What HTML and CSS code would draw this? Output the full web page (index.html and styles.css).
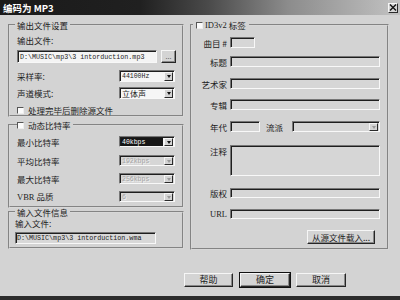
FILE: index.html
```html
<!DOCTYPE html>
<html>
<head>
<meta charset="utf-8">
<link rel="stylesheet" href="styles.css">
</head>
<body>
<div class="window">
  <div class="titlebar">
    <span class="title">编码为 MP3</span>
    <span class="close"><svg width="8" height="7" viewBox="0 0 8 7"><path d="M1 0.5 L7 6.5 M7 0.5 L1 6.5" stroke="#111" stroke-width="1.4"/></svg></span>
  </div>
  <div class="main">
    <div class="left">
      <fieldset class="group g1">
        <legend>输出文件设置</legend>
        <div class="lbl l1">输出文件:</div>
        <div class="filerow">
          <div class="edit white mono">D:\MUSIC\mp3\3 intorduction.mp3</div>
          <div class="btn dots">...</div>
        </div>
        <div class="row r1"><span>采样率:</span><div class="combo"><span class="val mono">44100Hz</span><span class="arrow"></span></div></div>
        <div class="row r2"><span>声道模式:</span><div class="combo"><span class="val">立体声</span><span class="arrow"></span></div></div>
        <div class="chkrow"><span class="chk"></span><span>处理完毕后删除源文件</span></div>
      </fieldset>
      <fieldset class="group g2">
        <legend><span class="chk"></span>动态比特率</legend>
        <div class="row s1"><span>最小比特率</span><div class="combo"><span class="val mono sel">40kbps</span><span class="arrow"></span></div></div>
        <div class="row s2"><span>平均比特率</span><div class="combo dis"><span class="val mono">192kbps</span><span class="arrow"></span></div></div>
        <div class="row s3"><span>最大比特率</span><div class="combo dis"><span class="val mono">256kbps</span><span class="arrow"></span></div></div>
        <div class="row s4"><span><span class="ser">VBR</span> 品质</span><div class="combo dis"><span class="val mono">6</span><span class="arrow"></span></div></div>
      </fieldset>
      <fieldset class="group g3">
        <legend>输入文件信息</legend>
        <div class="lbl l3">输入文件:</div>
        <div class="edit in mono">D:\MUSIC\mp3\3 intorduction.wma</div>
      </fieldset>
    </div>
    <fieldset class="group right">
      <legend><span class="chk"></span><span class="ser">ID3v2</span>&nbsp;标签</legend>
      <div class="frow t1"><span class="flbl">曲目 #</span><div class="edit track"></div></div>
      <div class="frow t2"><span class="flbl">标题</span><div class="edit wide"></div></div>
      <div class="frow t3"><span class="flbl">艺术家</span><div class="edit wide"></div></div>
      <div class="frow t4"><span class="flbl">专辑</span><div class="edit wide"></div></div>
      <div class="frow t5"><span class="flbl">年代</span><div class="edit year"></div><span class="genre">流派</span><div class="combo dis genrebox"><span class="val"></span><span class="arrow"></span></div></div>
      <div class="frow t6"><span class="flbl">注释</span><div class="edit wide memo"></div></div>
      <div class="frow t7"><span class="flbl">版权</span><div class="edit wide"></div></div>
      <div class="frow t8"><span class="flbl ser">URL</span><div class="edit wide"></div></div>
      <div class="loadrow"><div class="btn load">从源文件载入...</div></div>
    </fieldset>
  </div>
  <div class="buttons">
    <div class="btn big">帮助</div>
    <div class="btn big def">确定</div>
    <div class="btn big">取消</div>
  </div>
</div>
</body>
</html>
```
FILE: styles.css
```css
* { box-sizing: border-box; }
html, body { margin: 0; padding: 0; }
body {
  width: 400px; height: 300px; overflow: hidden;
  background: #d3d3d3;
  font-family: "Noto Sans CJK SC", "Noto Sans", sans-serif;
  font-size: 8.5px; line-height: 10px; color: #1c1c1c;
}
.ser { font-family: "Liberation Serif", "Noto Sans CJK SC", serif; font-size: 8.5px; }
.window {
  width: 400px; height: 300px;
  display: flex; flex-direction: column;
  border-bottom: 4px solid #2c2c2c;
}
.titlebar {
  height: 15px; flex: none;
  display: flex; align-items: center; justify-content: space-between;
  padding: 0 2px 0 3px;
  background: linear-gradient(to right, #1a1a1a 0%, #202020 35%, #4a4a4a 52%, #8c8c8c 72%, #c2c2c2 100%);
}
.title { color: #fff; font-weight: bold; font-size: 9.5px; line-height: 12px; }
.close {
  width: 10px; height: 10px; display: flex; align-items: center; justify-content: center;
  background: #d6d6d6;
  border: 1px solid; border-color: #f6f6f6 #2a2a2a #2a2a2a #f6f6f6;
}
.main { flex: none; display: flex; gap: 6px; padding: 5px 0 0 8px; }
.left { width: 176px; display: flex; flex-direction: column; }
.group {
  margin: 0; min-width: 0;
  border: 2px groove #d8d8d8;
}
.group legend { padding: 0 2px; line-height: 10px; height: 10px; display: flex; align-items: center; }
.g1 { padding: 0 6px 0 7px; }
.g1 legend { margin-left: -2px; }
.g2 { margin-top: 3px; padding: 0 6px 4px 7px; }
.g2 legend { margin-left: 0; padding: 0 2px 0 0; }
.g3 { padding: 0 6px 3px 5px; }
.g3 legend { margin-left: 0; line-height: 8px; height: 8px; }
.lbl { height: 10px; }
.l1 { margin-top: 5px; }
.l3 { margin-top: 2px; }
.filerow { margin-top: 5px; height: 13px; display: flex; gap: 4px; }
.edit {
  height: 100%;
  background: #d6d6d6;
  border: 1px solid; border-color: #767676 #f8f8f8 #f8f8f8 #767676;
  box-shadow: inset 1px 1px 0 #1e1e1e;
}
.white { background: #f4f4f4; }
.filerow .edit { width: 140px; padding: 1px 0 0 2px; font-size: 6.7px; line-height: 10px; white-space: nowrap; overflow: hidden; }
.mono { font-family: "Liberation Mono", "Courier New", monospace; }
.btn {
  background: #d4d4d4;
  border: 1px solid; border-color: #f6f6f6 #262626 #262626 #f6f6f6;
  box-shadow: inset -1px -1px 0 #888;
  display: flex; align-items: center; justify-content: center;
}
.dots { width: 15px; height: 13px; font-size: 7px; color: #555; padding-bottom: 2px; }
.row { display: flex; justify-content: space-between; align-items: center; padding-right: 1px; }
.r1 { margin-top: 7px; height: 12px; }
.r2 { margin-top: 5px; height: 12px; }
.combo {
  width: 56px; height: 100%; display: flex;
  background: #f6f6f6;
  border: 1px solid; border-color: #767676 #f8f8f8 #f8f8f8 #767676;
  box-shadow: inset 1px 1px 0 #1e1e1e;
  padding: 1px 1px 0 1px;
}
.combo .val { flex: 1; font-size: 6.5px; line-height: 9px; padding-left: 1px; white-space: nowrap; overflow: hidden; }
.combo .val:not(.mono) { font-size: 8px; line-height: 9px; }
.combo .sel { background: #161616; color: #fff; margin-right: 1px; }
.arrow {
  width: 9px; flex: none; position: relative;
  background: #d4d4d4;
  border: 1px solid; border-color: #f6f6f6 #2a2a2a #2a2a2a #f6f6f6;
  display: flex; align-items: center; justify-content: center;
}
.arrow::after {
  content: ""; width: 0; height: 0;
  border-left: 2.5px solid transparent; border-right: 2.5px solid transparent;
  border-top: 3px solid #111;
}
.combo.dis { background: #d6d6d6; }
.combo.dis .val { color: #a4a4a4; text-shadow: 1px 1px 0 #f2f2f2; }
.combo.dis .arrow::after { border-top-color: #9a9a9a; }
.chkrow { margin-top: 6px; height: 10px; display: flex; align-items: center; gap: 4px; }
.chk {
  width: 7px; height: 7px; flex: none; background: #fbfbfb;
  border: 1px solid; border-color: #555 #eee #eee #555;
  margin-right: 4px;
}
.chkrow .chk { margin-right: 0; }
.s1 { margin-top: 6px; height: 11px; }
.s2 { margin-top: 8px; height: 11px; }
.s3 { margin-top: 7px; height: 11px; }
.s4 { margin-top: 7px; height: 11px; }
.g3 .in { margin-top: 4px; height: 12px; width: 141px; font-size: 6.7px; line-height: 9px; padding: 1px 0 0 1px; white-space: nowrap; overflow: hidden; background: #d8d8d8; }
.right { width: 199px; padding: 0 7px 4px 1px; }
.right legend { margin-left: 0; padding: 0 3px 0 3px; }
.right legend .chk { margin-right: 2px; }
.frow { display: flex; align-items: center; gap: 3px; }
.flbl { width: 34px; text-align: right; flex: none; }
.wide { width: 150px; }
.t1 { margin-top: 7px; height: 11px; }
.track { width: 25px; }
.t2 { margin-top: 8px; height: 11px; }
.t3 { margin-top: 11px; height: 11px; }
.t4 { margin-top: 10px; height: 11px; }
.t5 { margin-top: 11px; height: 11px; }
.year { width: 30px; }
.genre { width: 24px; margin-left: 3px; flex: none; }
.genrebox { width: 88px; margin-left: -1px; }
.t6 { margin-top: 13px; height: 31px; align-items: flex-start; }
.t6 .flbl { padding-top: 1px; }
.t7 { margin-top: 12px; height: 10px; }
.t8 { margin-top: 11px; height: 10px; }
.loadrow { margin-top: 11px; height: 14px; display: flex; justify-content: flex-end; padding-right: 5px; }
.load { width: 68px; height: 14px; font-size: 8.5px; }
.buttons { margin-top: 23px; display: flex; justify-content: flex-end; gap: 6px; padding-right: 54px; }
.big { width: 50px; height: 14px; font-size: 9px; }
.big:first-child { width: 49px; margin-right: 1px; }
.def { outline: 1px solid #111; }
```
